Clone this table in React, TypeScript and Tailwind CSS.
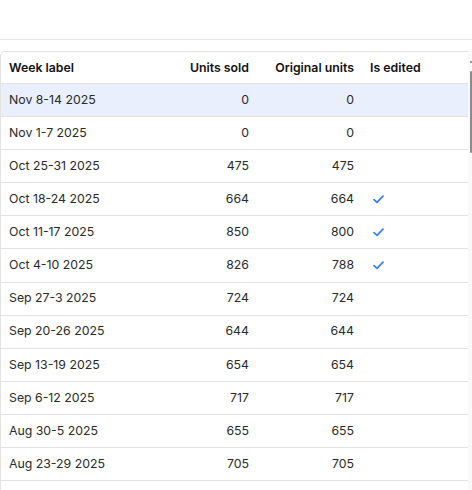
import { Fragment } from 'react'

type Row = { label: string; sold: number; original: number; edited: boolean }

const rows: Row[] = [
  { label: 'Nov 8-14 2025', sold: 0, original: 0, edited: false },
  { label: 'Nov 1-7 2025', sold: 0, original: 0, edited: false },
  { label: 'Oct 25-31 2025', sold: 475, original: 475, edited: false },
  { label: 'Oct 18-24 2025', sold: 664, original: 664, edited: true },
  { label: 'Oct 11-17 2025', sold: 850, original: 800, edited: true },
  { label: 'Oct 4-10 2025', sold: 826, original: 788, edited: true },
  { label: 'Sep 27-3 2025', sold: 724, original: 724, edited: false },
  { label: 'Sep 20-26 2025', sold: 644, original: 644, edited: false },
  { label: 'Sep 13-19 2025', sold: 654, original: 654, edited: false },
  { label: 'Sep 6-12 2025', sold: 717, original: 717, edited: false },
  { label: 'Aug 30-5 2025', sold: 655, original: 655, edited: false },
  { label: 'Aug 23-29 2025', sold: 705, original: 705, edited: false },
]

function Tick() {
  return (
    <svg width="11" height="9" viewBox="0 0 11 9" fill="none">
      <path d="M1 4.6 L4 7.4 L10 1.2" stroke="#3b82f6" strokeWidth="1.8" strokeLinecap="round" strokeLinejoin="round" />
    </svg>
  )
}

export default function App() {
  return (
    <div className="w-[472px] h-[490px] overflow-hidden bg-white font-['Inter',sans-serif] text-[12.3px] text-[#2a2a2a]">
      <div className="h-[40px] border-b border-[#e6e6e6]" />
      <div className="flex pt-[11px]">
        <div className="w-[468px] border-l border-t border-[#e3e3e3] rounded-tl-[5px]">
          <div className="grid grid-cols-[156px_100px_105px_106px]">
            <div className="h-[32px] flex items-center pl-2 pt-px font-semibold text-[#111] border-b border-[#e3e3e3]">Week label</div>
            <div className="h-[32px] flex items-center justify-end pr-2 pt-px font-semibold text-[#111] border-b border-[#e3e3e3]">Units sold</div>
            <div className="h-[32px] flex items-center justify-end pr-2 pt-px font-semibold text-[#111] border-b border-[#e3e3e3]">Original units</div>
            <div className="h-[32px] flex items-center pl-2 pt-px font-semibold text-[#111] border-b border-[#e3e3e3]">Is edited</div>
            {rows.map((r, i) => {
              const bg = i === 0 ? 'bg-[#e9effc]' : 'bg-white'
              return (
                <Fragment key={r.label}>
                  <div className={`h-[33.1px] flex items-center pl-2 border-b border-[#e3e3e3] ${bg}`}>{r.label}</div>
                  <div className={`h-[33.1px] flex items-center justify-end pr-2 border-b border-[#e3e3e3] ${bg}`}>{r.sold}</div>
                  <div className={`h-[33.1px] flex items-center justify-end pr-2 border-b border-[#e3e3e3] ${bg}`}>{r.original}</div>
                  <div className={`h-[33.1px] flex items-center pl-[11px] border-b border-[#e3e3e3] ${bg}`}>{r.edited && <Tick />}</div>
                </Fragment>
              )
            })}
          </div>
          <div className="h-[33px] border-b border-[#e3e3e3]" />
        </div>
        <div className="w-[4px] bg-[#f9f9f9] flex flex-col items-end">
          <div className="mt-[10px] w-[2px] h-[2px] bg-[#9a9a9a]" />
          <div className="mt-[8px] w-[2px] h-[82px] bg-[#8c8c8c] rounded-full" />
        </div>
      </div>
    </div>
  )
}
